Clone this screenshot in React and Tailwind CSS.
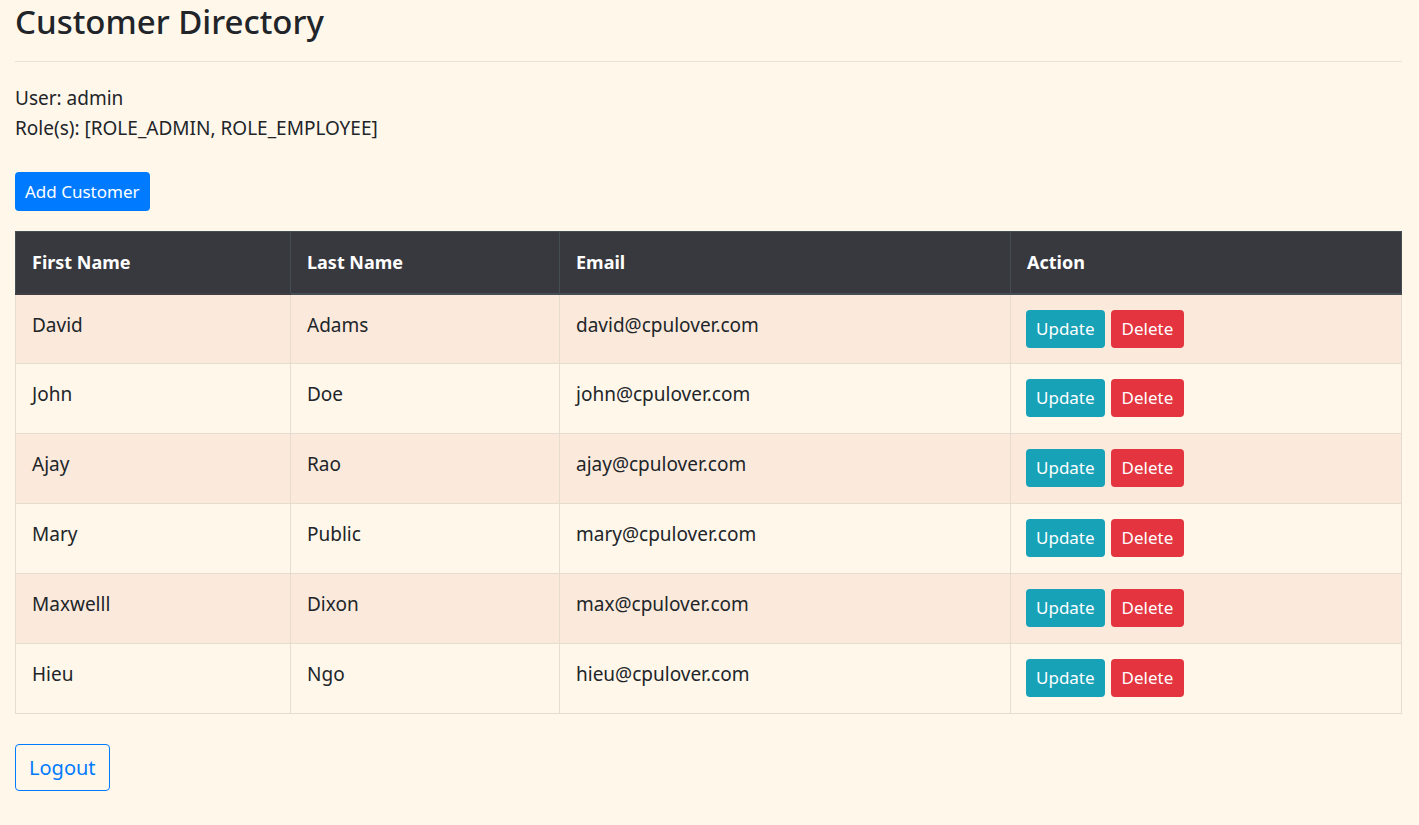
import React from "react";

const rows = [
  ["David", "Adams", "david@cpulover.com"],
  ["John", "Doe", "john@cpulover.com"],
  ["Ajay", "Rao", "ajay@cpulover.com"],
  ["Mary", "Public", "mary@cpulover.com"],
  ["Maxwelll", "Dixon", "max@cpulover.com"],
  ["Hieu", "Ngo", "hieu@cpulover.com"],
];

export default function App() {
  return (
    <div
      className="min-h-[825px] bg-[#fff7ea] pl-[15px] pr-[17px] text-[#212529] text-[19px]"
      style={{ fontFamily: '"Noto Sans", "Open Sans", sans-serif' }}
    >
      <h2 className="pt-[1px] text-[33px] leading-[42px] font-medium">Customer Directory</h2>
      <hr className="mt-[18px] border-t border-[#e9e3d8]" />
      <div className="mt-[21px] leading-[30px]">
        <div>User: admin</div>
        <div>Role(s): [ROLE_ADMIN, ROLE_EMPLOYEE]</div>
      </div>
      <div className="mt-[29px]">
        <button className="h-[39px] px-[10px] rounded-[4px] bg-[#007bff] text-white text-[17px] leading-[39px]">
          Add Customer
        </button>
      </div>
      <table className="mt-[20px] w-full border-collapse border border-[#e6dccf]">
        <thead>
          <tr className="bg-[#38393e] text-white text-[18px] font-bold">
            <th className="w-[275px] h-[62px] px-[16px] text-left border border-[#454d55] border-b-2 border-b-[#3d3f44]">First Name</th>
            <th className="w-[269px] px-[16px] text-left border border-[#454d55] border-b-2">Last Name</th>
            <th className="w-[451px] px-[16px] text-left border border-[#454d55] border-b-2">Email</th>
            <th className="px-[16px] text-left border border-[#454d55] border-b-2">Action</th>
          </tr>
        </thead>
        <tbody>
          {rows.map((r, i) => (
            <tr key={i} className={i % 2 === 0 ? "bg-[#fbeadc]" : "bg-[#fff7ea]"}>
              <td className="h-[70px] px-[16px] align-top pt-[16px] border border-[#e6dccf]">{r[0]}</td>
              <td className="px-[16px] align-top pt-[16px] border border-[#e6dccf]">{r[1]}</td>
              <td className="px-[16px] align-top pt-[16px] border border-[#e6dccf]">{r[2]}</td>
              <td className="px-[15px] align-top pt-[15px] border border-[#e6dccf]">
                <div className="flex gap-[6px]">
                  <button className="h-[38px] px-[10px] rounded-[4px] bg-[#17a2b8] text-white text-[17px]">Update</button>
                  <button className="h-[38px] px-[11px] rounded-[4px] bg-[#e3343f] text-white text-[17px]">Delete</button>
                </div>
              </td>
            </tr>
          ))}
        </tbody>
      </table>
      <button className="mt-[30px] h-[47px] px-[13px] rounded-[4px] border border-[#007bff] text-[#007bff] text-[20px]">
        Logout
      </button>
    </div>
  );
}
